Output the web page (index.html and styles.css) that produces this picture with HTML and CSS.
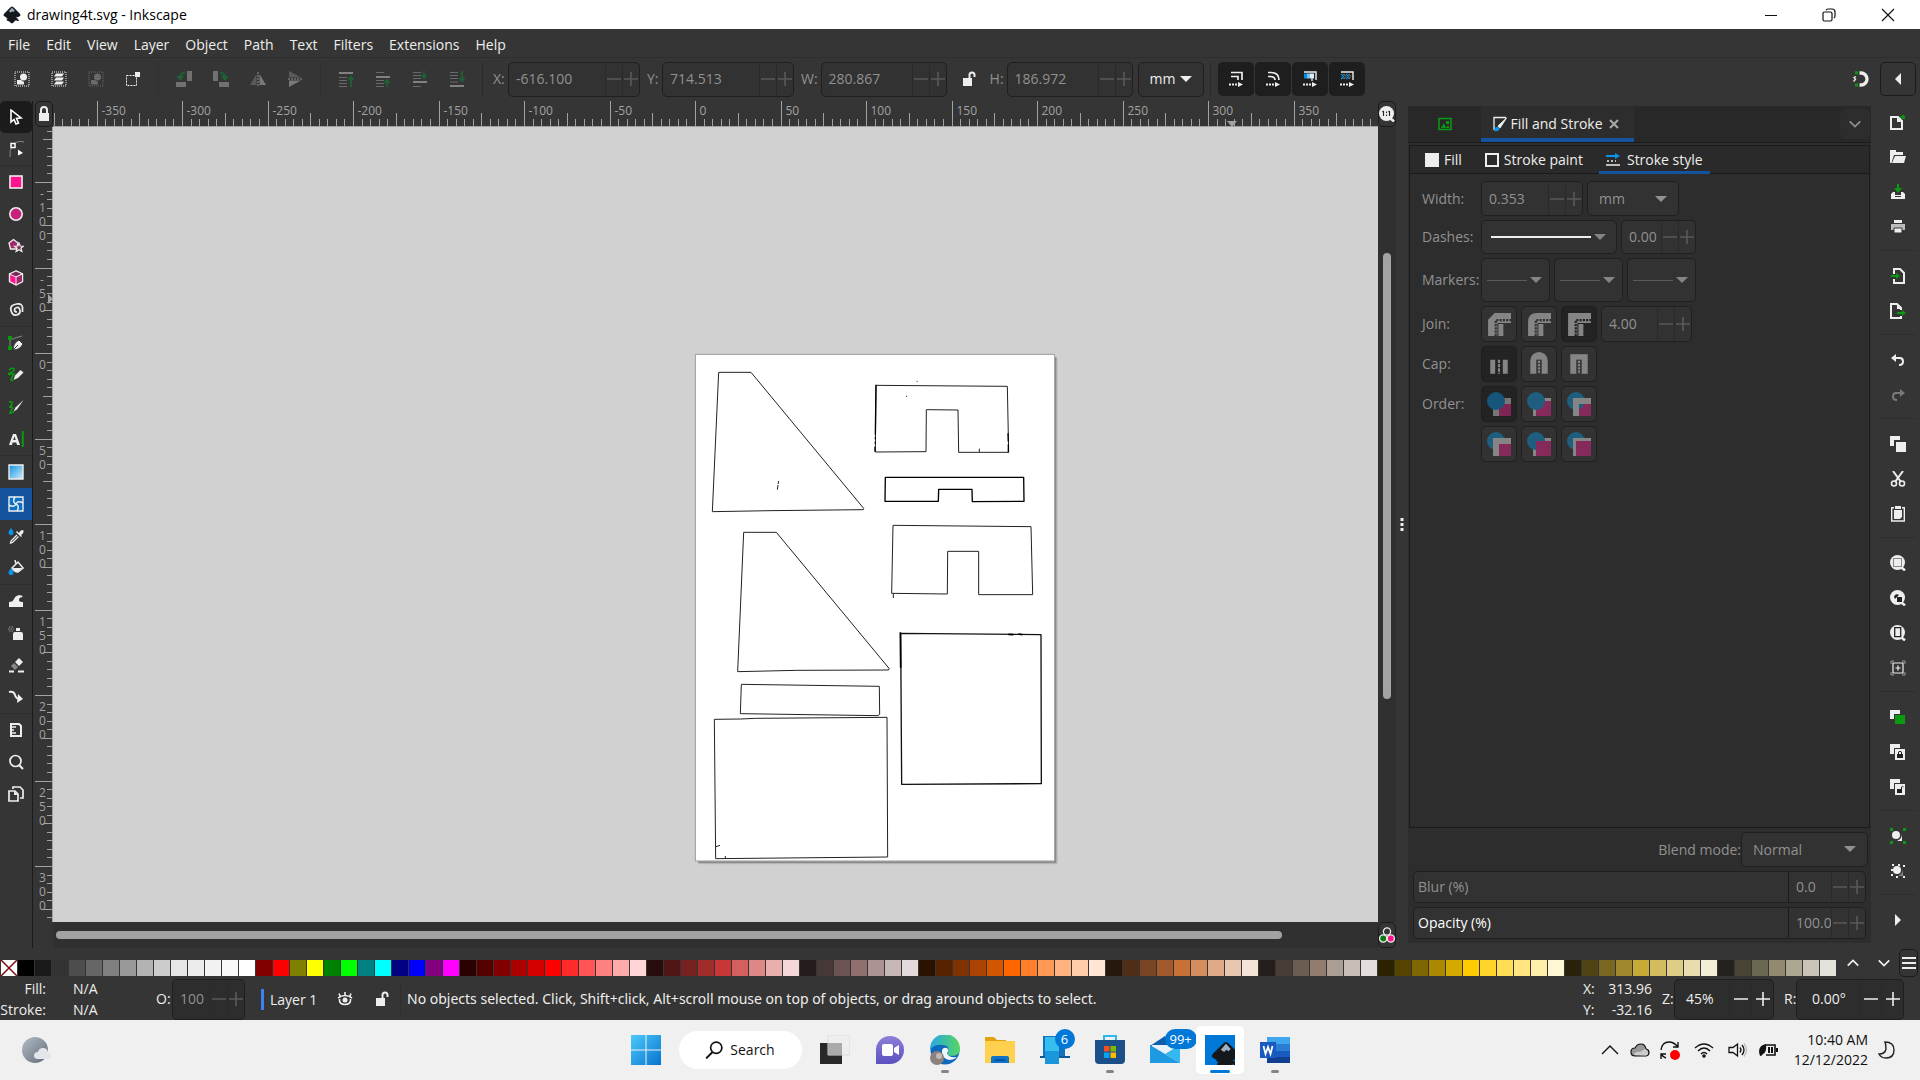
FILE: index.html
```html
<!DOCTYPE html>
<html lang="en">
<head>
<meta charset="utf-8">
<title>drawing4t.svg - Inkscape</title>
<link rel="stylesheet" href="styles.css">
</head>
<body>
<svg class="defs" aria-hidden="true">
  <symbol id="minus" viewBox="0 0 16 16"><path d="M1 8h14" stroke="currentColor" stroke-width="1.6"/></symbol>
  <symbol id="plus" viewBox="0 0 16 16"><path d="M1 8h14M8 1v14" stroke="currentColor" stroke-width="1.6"/></symbol>
  <symbol id="lock" viewBox="0 0 16 16"><path d="M3 7h10v8H3z" fill="currentColor"/><path d="M5 8V4a3 3 0 0 1 6 0v4" fill="none" stroke="currentColor" stroke-width="2"/></symbol>
  <symbol id="unlock" viewBox="0 0 16 16"><path d="M2 7h9v8H2z" fill="currentColor"/><path d="M8.500 8V4a2.500 2.500 0 0 1 5 0v2" fill="none" stroke="currentColor" stroke-width="2"/></symbol>
  <symbol id="inkscape" viewBox="0 0 16 16"><path d="M8 0.500Q9 0.600 10 1.800L15 6.800Q16.500 8.600 14 9.500L11.500 10.200Q13.500 11 13.500 12Q11 12.500 10.500 13.300Q9 15.500 8 15.500Q6.500 15.200 6 14L3.500 12.800Q2.500 12 4.500 11L2 9.500Q-.5 8.500 1 6.800L6 1.800Q7 .6 8 .5Z" fill="#15191d"/><path d="M8 1.500 10.500 4.200 9.300 5.400 8.200 4.600 7 5.800 5.200 4.600Z" fill="#9fb0c2"/><path d="M3 10.500h2M12 12.800h2" stroke="#15191d"/></symbol>
  <symbol id="down" viewBox="0 0 16 16"><path d="m2 5 6 6 6-6" fill="none" stroke="currentColor" stroke-width="2"/></symbol>
  <symbol id="up" viewBox="0 0 16 16"><path d="m2 11 6-6 6 6" fill="none" stroke="currentColor" stroke-width="2"/></symbol>
  <symbol id="tri-down" viewBox="0 0 12 8"><path d="M0 1h12L6 7z" fill="currentColor"/></symbol>
  <symbol id="doc" viewBox="0 0 16 16"><path d="M1 3h7l4 4v8H1z" fill="none" stroke="currentColor" stroke-width="2"/><path d="M7 3v5h5z" fill="currentColor"/></symbol>
  <symbol id="mag" viewBox="0 0 16 16"><circle cx="7.500" cy="7.500" r="7.500" fill="#eee"/><path d="m11 12 4 3.500" stroke="#eee" stroke-width="2.500"/></symbol>
  <symbol id="scale-end" viewBox="0 0 16 16"><path d="M1 13.500h8" stroke="#eee" stroke-width="2" stroke-dasharray="2 1"/><path d="M10 11l5 2.500-5 2.500z" fill="#eee"/></symbol>
</svg>

<header class="titlebar">
  <svg class="i18"><use href="#inkscape"/></svg>
  <h1>drawing4t.svg - Inkscape</h1>
  <div class="winbtns">
    <button aria-label="Minimize"><svg class="i14" viewBox="0 0 14 14"><path d="M1 7.500h12" stroke="#111"/></svg></button>
    <button aria-label="Restore"><svg class="i14" viewBox="0 0 14 14" fill="none" stroke="#111" stroke-width="1.200"><rect x="1" y="4" width="9" height="9" rx="1.500"/><path d="M4 2.200Q4.500 1 6 1h4q3 0 3 3v4q0 1.500-1.200 2"/></svg></button>
    <button aria-label="Close"><svg class="i14" viewBox="0 0 14 14"><path d="m1 1 12 12M13 1 1 13" stroke="#111" stroke-width="1.200"/></svg></button>
  </div>
</header>

<nav class="menubar">
  <a href="#">File</a><a href="#">Edit</a><a href="#">View</a><a href="#">Layer</a><a href="#">Object</a><a href="#">Path</a><a href="#">Text</a><a href="#">Filters</a><a href="#">Extensions</a><a href="#">Help</a>
</nav>

<div class="toolbar">
  <div class="tgroup">
    <button aria-label="Select all"><svg viewBox="0 0 16 16"><path d="M1 1h14v14H1z" fill="none" stroke="#eee" stroke-dasharray="1 1"/><circle cx="9.500" cy="6" r="3.500" fill="#eee"/><path d="M3 9h4l3 2v2.500H3z" fill="#eee"/></svg></button>
    <button aria-label="Select all in all layers"><svg viewBox="0 0 16 16"><path d="M1 1h14v14H1z" fill="none" stroke="#eee" stroke-dasharray="1 1"/><path d="M5 2.500h8l-2 3H3zM5 6.500h8l-2 3H3zM5 10.500h8l-2 3H3z" fill="#eee"/></svg></button>
    <button aria-label="Deselect" class="dim"><svg viewBox="0 0 16 16"><path d="M1 1h14v14H1z" fill="none" stroke="#aaa" stroke-dasharray="1 1"/><circle cx="9.500" cy="6" r="3.500" fill="#aaa"/><path d="M3 9h4l3 2v2.500H3z" fill="#aaa"/></svg></button>
    <button aria-label="Touch selection"><svg viewBox="0 0 16 16"><path d="M1.500 4.500h10v10h-10z" fill="none" stroke="#eee" stroke-dasharray="2 1"/><path d="M10 1h5v5h-5z" fill="#eee"/></svg></button>
  </div>
  <div class="tgroup dim">
    <button aria-label="Rotate left"><svg viewBox="0 0 16 16"><path d="M11 0h5v10h-5zM0 11h10v5H0z" fill="#bbb"/><path d="M9 1.500Q4 2 4 7M1.500 5 4 8.500 7 5" fill="none" stroke="#093" stroke-width="2"/></svg></button>
    <button aria-label="Rotate right"><svg viewBox="0 0 16 16"><path d="M0 0h5v10H0zM6 11h10v5H6z" fill="#bbb"/><path d="M7 1.500q5 .5 5 5.500M9 5l3 3.500L14.500 5" fill="none" stroke="#093" stroke-width="2"/></svg></button>
    <button aria-label="Flip horizontal"><svg viewBox="0 0 16 16"><path d="M6.500 3v11H0z" fill="#888"/><path d="M9.500 3v11H16z" fill="#ccc"/><path d="M8 1v15" stroke="#fff" stroke-dasharray="2 1"/></svg></button>
    <button aria-label="Flip vertical"><svg viewBox="0 0 16 16"><path d="M2 0v6.500h12z" fill="#888"/><path d="M2 16V9.500h12z" fill="#ccc"/><path d="M1 8h15" stroke="#fff" stroke-dasharray="2 1"/></svg></button>
  </div>
  <div class="tgroup dim">
    <button aria-label="Raise to top"><svg viewBox="0 0 16 16"><path d="M1 2h14" stroke="#ddd" stroke-width="2"/><path d="M1 6.500h8M1 9.500h8M1 12.500h8M1 15.500h8" stroke="#aaa"/><path d="M13 16V6M10.500 9 13 6l2.500 3" fill="none" stroke="#093" stroke-width="1.800"/></svg></button>
    <button aria-label="Raise"><svg viewBox="0 0 16 16"><path d="M1 6h14" stroke="#ddd" stroke-width="2"/><path d="M1 1.500h8M1 9.500h8M1 12.500h8M1 15.500h8" stroke="#aaa"/><path d="M12 16V9M9.500 12 12 9l2.500 3" fill="none" stroke="#093" stroke-width="1.800"/></svg></button>
    <button aria-label="Lower"><svg viewBox="0 0 16 16"><path d="M1 11h14" stroke="#ddd" stroke-width="2"/><path d="M1 1.500h8M1 4.500h8M1 7.500h8M1 15.500h8" stroke="#aaa"/><path d="M12 0v7M9.500 4 12 7l2.500-3" fill="none" stroke="#093" stroke-width="1.800"/></svg></button>
    <button aria-label="Lower to bottom"><svg viewBox="0 0 16 16"><path d="M1 15h14" stroke="#ddd" stroke-width="2"/><path d="M1 1.500h8M1 4.500h8M1 7.500h8M1 11h8" stroke="#aaa"/><path d="M13 0v10M10.500 7l2.500 3 2.500-3" fill="none" stroke="#093" stroke-width="1.800"/></svg></button>
  </div>
  <div class="coords">
    <label for="cx">X:</label>
    <div class="spin off wide"><input id="cx" value="-616.100"><button aria-label="Decrease X"><svg><use href="#minus"/></svg></button><button aria-label="Increase X"><svg><use href="#plus"/></svg></button></div>
    <label for="cy" class="ly">Y:</label>
    <div class="spin off wide"><input id="cy" value="714.513"><button aria-label="Decrease Y"><svg><use href="#minus"/></svg></button><button aria-label="Increase Y"><svg><use href="#plus"/></svg></button></div>
    <label for="cw" class="ly">W:</label>
    <div class="spin off size"><input id="cw" value="280.867"><button aria-label="Decrease W"><svg><use href="#minus"/></svg></button><button aria-label="Increase W"><svg><use href="#plus"/></svg></button></div>
    <button class="plain ratio" aria-label="Lock ratio"><svg><use href="#unlock"/></svg></button>
    <label for="ch">H:</label>
    <div class="spin off size"><input id="ch" value="186.972"><button aria-label="Decrease H"><svg><use href="#minus"/></svg></button><button aria-label="Increase H"><svg><use href="#plus"/></svg></button></div>
    <div class="drop unit"><select aria-label="Unit"><option>mm</option></select><svg><use href="#tri-down"/></svg></div>
  </div>
  <div class="toggles">
    <button aria-label="Scale stroke width"><svg viewBox="0 0 16 16"><path d="M3 1.500h11V9M3 5.500h7V9" fill="none" stroke="#eee" stroke-width="1.700"/><use href="#scale-end"/></svg></button>
    <button aria-label="Scale corners"><svg viewBox="0 0 16 16"><path d="M3 1.500h3q8 0 8 7.500M3 5.500h2q5 0 5 3.500" fill="none" stroke="#eee" stroke-width="1.700"/><use href="#scale-end"/></svg></button>
    <button aria-label="Move gradients"><svg viewBox="0 0 16 16"><path d="M2 1h12v8M10 7.500V10" fill="none" stroke="#eee" stroke-width="1.400"/><path d="M2 2.500h3v5H2z" fill="#0b8ce0"/><path d="M5 2.500h3v5H5z" fill="#7cc4f2"/><path d="M8 2.500h4v5H8z" fill="#def"/><use href="#scale-end"/></svg></button>
    <button aria-label="Move patterns"><svg viewBox="0 0 16 16"><path d="M2 1h12v8" fill="none" stroke="#eee" stroke-width="1.400"/><path d="m2 3 2.500 2.500L2 8m5-5 2.500 2.500L7 8" fill="none" stroke="#0b8ce0" stroke-width="1.300"/><path d="m4.500 3 2.500 2.500L4.500 8m5-5L12 5.500 9.500 8" fill="none" stroke="#eee" stroke-dasharray="1 1"/><use href="#scale-end"/></svg></button>
  </div>
  <button class="plain snap" aria-label="Snapping"><svg class="i18" viewBox="0 0 18 18"><path d="M8.500 3H10a6 6 0 0 1 0 12H8.500" fill="none" stroke="#eee" stroke-width="3.300"/><path d="M4 1.300h3v3H4zM4 13.600h3v3H4z" fill="#0a9a12"/><path d="M5 6.500 3 7.500 4.500 9.500 2.500 11.500" fill="none" stroke="#eee" stroke-width="1.300"/></svg></button>
  <button class="box snapmenu" aria-label="Snap options"><svg viewBox="0 0 16 16"><path d="M11 2v12L5 8z" fill="#eee"/></svg></button>
</div>

<main class="work">
  <div class="toolbox">
    <button class="on" aria-label="Selector"><svg viewBox="0 0 16 16"><path d="M3 1v12l3-2.500L8 15l2.500-1L8.500 9.500 13 9z" fill="none" stroke="#fff" stroke-width="1.600"/></svg></button>
    <button aria-label="Node"><svg viewBox="0 0 16 16"><path d="M2 16Q1 9 5 4T16 1" fill="none" stroke="#888"/><path d="M3 2.500h4v4H3z" fill="#353535" stroke="#fff" stroke-width="1.500"/><path d="m10 8.500 5 3.500-5 2.500z" fill="#fff"/></svg></button>
    <hr>
    <button aria-label="Rectangle"><svg viewBox="0 0 16 16"><rect x="2" y="2" width="12" height="12" fill="#ff1490" stroke="#eee" stroke-width="1.600"/></svg></button>
    <button aria-label="Ellipse"><svg viewBox="0 0 16 16"><circle cx="8" cy="8" r="6.200" fill="#c8207c" stroke="#eee" stroke-width="1.600"/></svg></button>
    <button aria-label="Star"><svg viewBox="0 0 16 16"><path d="m1 5 4.500-3.500L10 5l-1.500 6h-6z" fill="#a0296b" stroke="#eee" stroke-width="1.300"/><path d="m11 5 1.200 3 3.300.2-2.600 2 1 3.300-2.900-1.800-2.900 1.800 1-3.300-2.600-2 3.300-.2z" fill="#7e2a59" stroke="#eee" stroke-width="1.200"/></svg></button>
    <button aria-label="3D box"><svg viewBox="0 0 16 16"><path d="m8 1 6.500 3v7.500L8 15l-6.500-3.500V4z" fill="#ff1490" stroke="#eee" stroke-width="1.400"/><path d="m8 1 6.500 3L8 7 1.500 4z" fill="#7e2a59" stroke="#eee"/><path d="M8 7v8l6.500-3.500V4z" fill="#a0296b" stroke="#eee"/></svg></button>
    <button aria-label="Spiral"><svg viewBox="0 0 16 16"><path d="M9 10Q6.500 10 6.500 8T9 5.500 12 8.500 8.500 13 3 8.500 8.500 2 14.500 8v2" fill="none" stroke="#eee" stroke-width="1.700"/></svg></button>
    <hr>
    <button aria-label="Pen"><svg viewBox="0 0 16 16"><path d="M2 13V5Q6 3 14 1" fill="none" stroke="#888"/><path d="M0 1h4v4H0zM0 11h4v4H0z" fill="#0a9a12"/><path d="M5 15Q5 8 11 5l4 4q-3 6-10 6zm0 0 5-5" fill="#eee" stroke="#353535"/></svg></button>
    <button aria-label="Pencil"><svg viewBox="0 0 16 16"><path d="M1 3q4-3 5-1T2 6t4 1q-2 3-3 6l2 1" fill="none" stroke="#0a9a12" stroke-width="1.600"/><path d="m7 8.500 5.500-5.500 3 2.500L10 11l-4.500 2z" fill="#eee"/></svg></button>
    <button aria-label="Calligraphy"><svg viewBox="0 0 16 16"><path d="M1 3q4-1 3 2T1 8q3 0 4 1-2 2-3 5l4-1" fill="none" stroke="#0a9a12" stroke-width="1.600"/><path d="m5.500 12.500 2-4L15.500 1 9 10.500z" fill="#eee"/></svg></button>
    <button aria-label="Text"><svg viewBox="0 0 16 16"><path d="M1 14 5 3h3l4 11H9l-.7-2.500H4.600L4 14zm4.200-5h2.500L6.500 5.200z" fill="#eee" fill-rule="evenodd"/><path d="M14.800 0v16" stroke="#0a9a12" stroke-width="2"/></svg></button>
    <hr>
    <button aria-label="Gradient"><svg viewBox="0 0 16 16"><defs><linearGradient id="gr" x2="1" y2="1"><stop stop-color="#0c93e0"/><stop offset="1" stop-color="#d5ecfa"/></linearGradient></defs><path d="M1 1h14v14H1z" fill="url(#gr)" stroke="#eee" stroke-width="1.400"/></svg></button>
    <button class="cur" aria-label="Mesh"><svg viewBox="0 0 16 16"><path d="M1 1h14v14H1z" fill="#0d6fc4" stroke="#eee" stroke-width="1.400"/><path d="M8 8Q4 6 7 1M8 8q4 2 1 7M8 8q2-4 7-1M8 8q-2 4-7 1" fill="none" stroke="#eee" stroke-width="1.500"/></svg></button>
    <button aria-label="Dropper"><svg viewBox="0 0 16 16"><path d="M3 0q3 4 2.400 5.400a2.500 2.500 0 0 1-4.800 0Q0 4 3 0z" fill="#0b93e8"/><path d="m9 7-6 6-.5 2 2-.5 6-6" fill="none" stroke="#eee" stroke-width="1.300"/><path d="m8 4 5 5 1-1-1-1q3-2 2.500-4.500Q13 1 11 5l-2-2z" fill="#eee"/></svg></button>
    <button aria-label="Bucket"><svg viewBox="0 0 16 16"><path d="m4 8 6-6 5 6-5 4q-4 0-6-4zM8 4 7 0" fill="none" stroke="#eee" stroke-width="1.500"/><path d="M5 8h9l-4 4q-4 0-5-4z" fill="#eee"/><path d="M3 8q3 4 2.400 5.400a2.500 2.500 0 0 1-4.800 0Q0 12 3 8z" fill="#0b93e8"/></svg></button>
    <hr>
    <button aria-label="Tweak"><svg viewBox="0 0 16 16"><path d="M1 14V9q4 0 5-3t5-4q3 0 4 2-4 0-4 3 0 2 4 2v5z" fill="#eee"/></svg></button>
    <button aria-label="Spray"><svg viewBox="0 0 16 16"><path d="M5 9q0-2 2-2h6q2 0 2 2v6H5zM8 3h4v3H8z" fill="#eee"/><path d="M1 2h5M0 4h6M1 6h4" stroke="#999" stroke-dasharray="1.500 1"/></svg></button>
    <button aria-label="Eraser"><svg viewBox="0 0 16 16"><path d="m7 5 4-4 4 4-4 4z" fill="#eee"/><path d="m3 9 3-3 4 4-3 3z" fill="#888"/><path d="M1 14.500h5m4 0h6" stroke="#eee" stroke-width="1.800"/></svg></button>
    <button aria-label="Connector"><svg viewBox="0 0 16 16"><path d="M1 3q5-1 6 3t5 4" fill="none" stroke="#eee" stroke-width="2"/><path d="m10 5 5 5-6 4z" fill="#eee"/></svg></button>
    <hr>
    <button aria-label="Measure"><svg viewBox="0 0 16 16"><path d="M3 2h8l2 2v10H3z" fill="none" stroke="#eee" stroke-width="2"/><path d="M3 5h5M3 8h3M3 11h5" stroke="#eee" stroke-width="1.300"/></svg></button>
    <button aria-label="Zoom"><svg viewBox="0 0 16 16"><circle cx="7.500" cy="7" r="5.500" fill="none" stroke="#eee" stroke-width="1.700"/><path d="m11 11 4 4" stroke="#eee" stroke-width="2.200"/></svg></button>
    <button aria-label="Pages"><svg viewBox="0 0 16 16"><path d="M5 3V1h7l3 3v8h-3" fill="none" stroke="#eee" stroke-width="1.700"/><path d="M1 5h6l3 3v7H1z" fill="none" stroke="#eee" stroke-width="1.700"/><path d="M6 5v4h4z" fill="#eee"/></svg></button>
  </div>

  <section class="desk">
    <button class="box mini" aria-label="Lock guides"><svg><use href="#lock"/></svg></button>
    <svg class="ruler-h" id="ruler-h"></svg>
    <button class="box mini" aria-label="Zoom 1:1"><svg viewBox="0 0 16 16"><use href="#mag"/><path d="M4.500 5v5M10.500 5v5M7.500 5.500V7M7.500 8.500V10M3.500 6l1-1M9.500 6l1-1" stroke="#222" stroke-width="1.100"/></svg></button>
    <svg class="ruler-v" id="ruler-v"></svg>
    <div class="canvas">
      <svg class="page" viewBox="0 0 1110 1560" fill="none" stroke="#222" stroke-width="3" stroke-linejoin="round">
        <path d="M1097 22v1515H24" stroke="#8a8a8a" stroke-width="6"/>
        <path d="M1101 26v1515H28" stroke="#b4b4b4" stroke-width="3"/>
        <path d="M16 13h1078v1520H16z" fill="#fff" stroke="#999"/>
        <path d="M86 67h97l338 408-1 4-280 3-173 3zM161 547h98l338 408-1 5-276 1-177 4z"/>
        <path d="m558 106 394 3 4 198H806l-2-127-95-1-1 126-152 1zM868 296v10"/>
        <path d="m558 104-2 150M556 262v5M556 275v6M555 290v15M954 250l1 25M955 283v24" stroke="#000" stroke-width="4"/>
        <path d="m586 382h415l1 72-155 1-1-37H746l-1 36H585z" stroke="#000" stroke-width="4"/>
        <path d="m609 526 414 4 5 204H866V604h-93l-1 128-167-2zM610 730v14"/>
        <path d="m632 850 421 4 1 447-419 2z" stroke="#111" stroke-width="4"/>
        <path d="m631 847 1 106M955 853l15 1M985 852l12 2" stroke="#000" stroke-width="5"/>
        <path d="m154 1003 414 6 1 84-5 4-413-6zM73 1108l79-1 45-2 394-3 2 419-516 5z"/>
        <path d="m78 1490 12-4M106 1518v8M262 419l2-14M264 402l2-9M680 94h3M648 139h3"/>
      </svg>
    </div>
    <div class="scroll-v"><i></i></div>
    <div></div>
    <div class="scroll-h"><i></i></div>
    <button class="box mini" aria-label="Color management"><svg viewBox="0 0 16 16"><circle cx="8" cy="4.500" r="3.600" fill="none" stroke="#eee" stroke-width="1.300"/><circle cx="4.200" cy="11.500" r="3.600" fill="#0a7a12" stroke="#eee" stroke-width="1.300"/><circle cx="11.800" cy="11.500" r="3.600" fill="#ff1490" stroke="#eee" stroke-width="1.300"/></svg></button>
  </section>

  <div class="splitter"><svg viewBox="0 0 4 16"><path d="M.5 1h3v3h-3zM.5 6h3v3h-3zM.5 11h3v3h-3z" fill="#eee"/></svg></div>

  <aside class="dock">
    <div class="tabs">
      <button class="tab img" aria-label="Image"><svg class="i14" viewBox="0 0 14 14"><path d="M1 1.500h12v11H1z" fill="none" stroke="#0a9a12" stroke-width="1.500"/><path d="m3 11 3-5 2 5zM8 11l2-3 1.500 3zM8 4h3v3H8z" fill="#0a9a12"/></svg></button>
      <button class="tab active"><svg viewBox="0 0 16 16"><path d="M2 14V1.500h12" fill="none" stroke="#eee" stroke-width="1.300"/><path d="m6 10 8.500-8L8 12z" fill="#eee" stroke="#eee"/><path d="M2 15q1-5 4-4t1 3q-2 2-5 1z" fill="#0b93e8"/></svg><span>Fill and Stroke</span><svg class="x" viewBox="0 0 10 10"><path d="m1 1 8 8M9 1 1 9" stroke="#aaa" stroke-width="2"/></svg></button>
      <button class="more" aria-label="Dialogs"><svg class="i14"><use href="#down"/></svg></button>
    </div>
    <div class="frame">
      <div class="subtabs">
        <button><i class="sq full"></i>Fill</button>
        <button><i class="sq"></i>Stroke paint</button>
        <button class="sel"><svg viewBox="0 0 16 16"><path d="M0 4h10" stroke="#0b93e8" stroke-width="2"/><path d="m9 1 5 3-5 3z" fill="#0b93e8"/><path d="M1 9h2m2 0h2m2 0h1M0 13h14" stroke="#eee" stroke-width="1.500"/></svg>Stroke style</button>
      </div>
      <div class="form">
        <label for="sw">Width:</label>
        <div class="row r35"><div class="spin off w102"><input id="sw" value="0.353"><button aria-label="Thinner"><svg><use href="#minus"/></svg></button><button aria-label="Thicker"><svg><use href="#plus"/></svg></button></div><div class="drop off w92"><select aria-label="Stroke unit"><option>mm</option></select><svg><use href="#tri-down"/></svg></div></div>
        <label for="dash">Dashes:</label>
        <div class="row r34"><button class="line solid" id="dash"><i></i><svg><use href="#tri-down"/></svg></button><div class="spin off w75"><input aria-label="Dash offset" value="0.00"><button aria-label="Less offset"><svg><use href="#minus"/></svg></button><button aria-label="More offset"><svg><use href="#plus"/></svg></button></div></div>
        <label for="mk">Markers:</label>
        <div class="row r44"><button class="line" id="mk"><i></i><svg><use href="#tri-down"/></svg></button><button class="line" aria-label="Mid marker"><i></i><svg><use href="#tri-down"/></svg></button><button class="line" aria-label="End marker"><i></i><svg><use href="#tri-down"/></svg></button></div>
        <label for="jn">Join:</label>
        <div class="row r36">
          <button class="opt" id="jn" aria-label="Bevel join"><svg viewBox="0 0 22 22"><path d="M1 22V7l6-6h15v9h-7v12z" fill="#858585"/><path d="M8 22V7.500h14" fill="none" stroke="#333" stroke-width="2" stroke-dasharray="2 1"/><path d="M10 22V10.500h12" fill="none" stroke="#333"/></svg></button>
          <button class="opt" aria-label="Round join"><svg viewBox="0 0 22 22"><path d="M1 22V9q0-8 8-8h13v9h-7v12z" fill="#858585"/><path d="M8 22V7.500h14" fill="none" stroke="#333" stroke-width="2" stroke-dasharray="2 1"/><path d="M10 22V10.500h12" fill="none" stroke="#333"/></svg></button>
          <button class="opt on" aria-label="Miter join"><svg viewBox="0 0 22 22"><path d="M1 22V1h21v9h-7v12z" fill="#858585"/><path d="M8 22V7.500h14" fill="none" stroke="#222" stroke-width="2" stroke-dasharray="2 1"/><path d="M10 22V10.500h12" fill="none" stroke="#222"/></svg></button>
          <div class="spin off w91"><input aria-label="Miter limit" value="4.00"><button aria-label="Lower limit"><svg><use href="#minus"/></svg></button><button aria-label="Raise limit"><svg><use href="#plus"/></svg></button></div>
        </div>
        <label for="cp">Cap:</label>
        <div class="row r36">
          <button class="opt on" id="cp" aria-label="Butt cap"><svg viewBox="0 0 22 22"><path d="M3 7h4.500v13H3zM14.500 7H19v13h-4.500z" fill="#858585"/><path d="M11 7v13" stroke="#858585" stroke-width="2" stroke-dasharray="3 1"/></svg></button>
          <button class="opt" aria-label="Round cap"><svg viewBox="0 0 22 22"><path d="M3 20V8a8 8 0 0 1 16 0v12z" fill="#858585"/><path d="M8.500 20V7h5v13" fill="#333"/><path d="M11 8v12" stroke="#858585" stroke-width="2" stroke-dasharray="2 1"/></svg></button>
          <button class="opt" aria-label="Square cap"><svg viewBox="0 0 22 22"><path d="M3 20V2h16v18z" fill="#858585"/><path d="M8.500 20V7h5v13" fill="#333"/><path d="M11 8v12" stroke="#858585" stroke-width="2" stroke-dasharray="2 1"/></svg></button>
        </div>
        <label for="od">Order:</label>
        <div class="row r36">
          <button class="opt on" id="od" aria-label="Fill, stroke, markers"><svg viewBox="0 0 24 24"><path d="M6 6h18v18H6z" fill="#777"/><path d="M12 12h12v12H12z" fill="#7e2553"/><circle cx="9" cy="9" r="9" fill="#17557a"/></svg></button>
          <button class="opt" aria-label="Stroke, fill, markers"><svg viewBox="0 0 24 24"><path d="M6 6h18v18H6z" fill="#858585"/><path d="M9 9h15v15H9z" fill="#852a5a"/><circle cx="9" cy="9" r="9" fill="#205e80"/></svg></button>
          <button class="opt" aria-label="Fill, markers, stroke"><svg viewBox="0 0 24 24"><path d="M12 12h12v12H12z" fill="#852a5a"/><circle cx="9" cy="9" r="9" fill="#205e80"/><path d="M6 6h18v6H12v12H6z" fill="#858585"/></svg></button>
        </div>
        <span></span>
        <div class="row r36">
          <button class="opt" aria-label="Markers, fill, stroke"><svg viewBox="0 0 24 24"><circle cx="9" cy="9" r="9" fill="#205e80"/><path d="M6 6h18v18H6z" fill="#858585"/><path d="M12 12h12v12H12z" fill="#852a5a"/></svg></button>
          <button class="opt" aria-label="Stroke, markers, fill"><svg viewBox="0 0 24 24"><path d="M6 6h18v18H6z" fill="#858585"/><circle cx="9" cy="9" r="9" fill="#205e80"/><path d="M9 9h15v15H9z" fill="#852a5a"/></svg></button>
          <button class="opt" aria-label="Markers, stroke, fill"><svg viewBox="0 0 24 24"><circle cx="9" cy="9" r="9" fill="#205e80"/><path d="M6 6h18v18H6z" fill="#858585"/><path d="M9 9h15v15H9z" fill="#852a5a"/></svg></button>
        </div>
      </div>
    </div>
    <div class="blend"><label for="bm">Blend mode:</label><div class="drop off"><select id="bm"><option>Normal</option></select><svg><use href="#tri-down"/></svg></div></div>
    <div class="slide spin off"><label for="bl">Blur (%)</label><input id="bl" value="0.0"><button aria-label="Less blur"><svg><use href="#minus"/></svg></button><button aria-label="More blur"><svg><use href="#plus"/></svg></button></div>
    <div class="slide spin off lit"><label for="op">Opacity (%)</label><input id="op" value="100.0"><button aria-label="Less opacity"><svg><use href="#minus"/></svg></button><button aria-label="More opacity"><svg><use href="#plus"/></svg></button></div>
  </aside>

  <div class="commands">
    <button aria-label="New"><svg viewBox="0 0 16 16"><use href="#doc"/><path d="m13 0 1 2h2l-1.500 1.500.5 2-2-1-2 1 .5-2L10 2h2z" fill="#0a9a12"/></svg></button>
    <button aria-label="Open"><svg viewBox="0 0 16 16"><path d="M0 1h6v2h7v3H4L1.500 14H0z" fill="#eee"/><path d="M5 7h11l-2 7H2z" fill="#eee"/></svg></button>
    <button aria-label="Save"><svg viewBox="0 0 16 16"><path d="M1 15V10l2-2h2v3h6V8h2l2 2v5z" fill="#eee"/><path d="M5 12.500h6" stroke="#353535"/><path d="M8 0v5" stroke="#0a9a12" stroke-width="2"/><path d="M4 4h8L8 9z" fill="#0a9a12"/></svg></button>
    <button aria-label="Print"><svg viewBox="0 0 16 16"><path d="M4 1h8v3H4z" fill="#eee"/><path d="M1 5h14v6H1z" fill="#bbb"/><path d="M4 9h8v5H4z" fill="#eee" stroke="#353535"/></svg></button>
    <hr>
    <button aria-label="Import"><svg viewBox="0 0 16 16"><path d="M4 6V1h6l4 4v10H4v-4" fill="none" stroke="#eee" stroke-width="2"/><path d="M1 8h6" stroke="#0a9a12" stroke-width="2"/><path d="m6 5 4 3-4 3z" fill="#0a9a12"/></svg></button>
    <button aria-label="Export"><svg viewBox="0 0 16 16"><path d="M11 7V5L7 1H1v14h10v-2" fill="none" stroke="#eee" stroke-width="2"/><path d="M7 1v5h4z" fill="#eee"/><path d="M7 10h6" stroke="#0a9a12" stroke-width="2"/><path d="m12 7 4 3-4 3z" fill="#0a9a12"/></svg></button>
    <hr>
    <button aria-label="Undo"><svg viewBox="0 0 16 16"><path d="M3 6h7q3 0 3 3.500T9 13" fill="none" stroke="#eee" stroke-width="2"/><path d="M6 2v8L1 6z" fill="#eee"/></svg></button>
    <button aria-label="Redo" class="dim"><svg viewBox="0 0 16 16"><path d="M13 6H6Q3 6 3 9.500T7 13" fill="none" stroke="#ccc" stroke-width="2"/><path d="M10 2v8l5-4z" fill="#ccc"/></svg></button>
    <hr>
    <button aria-label="Copy"><svg viewBox="0 0 16 16"><path d="M0 0h10v4H4v6H0zM6 6h10v10H6z" fill="#eee"/></svg></button>
    <button aria-label="Cut"><svg viewBox="0 0 16 16"><path d="m3 0 8 11M13 0 5 11" stroke="#eee" stroke-width="2"/><circle cx="4" cy="12.500" r="2.500" fill="none" stroke="#eee" stroke-width="1.600"/><circle cx="12" cy="12.500" r="2.500" fill="none" stroke="#eee" stroke-width="1.600"/></svg></button>
    <button aria-label="Paste"><svg viewBox="0 0 16 16"><path d="M4 1.700H1.700v13.300h12.600V1.700H12" fill="none" stroke="#eee" stroke-width="1.400"/><path d="M5 0h6v3H5zM4 4h8v7l-2 2H4z" fill="#eee"/></svg></button>
    <hr>
    <button aria-label="Zoom selection"><svg viewBox="0 0 16 16"><use href="#mag"/><path d="M3.500 3.500h8v8h-8z" fill="none" stroke="#222" stroke-dasharray="1 1"/></svg></button>
    <button aria-label="Zoom drawing"><svg viewBox="0 0 16 16"><use href="#mag"/><path d="M7 7h5v5H7zM4 7a3 3 0 0 1 5-2L5 9z" fill="#222"/></svg></button>
    <button aria-label="Zoom page"><svg viewBox="0 0 16 16"><use href="#mag"/><path d="M4.700 2.700h6v9h-6z" fill="none" stroke="#222" stroke-width="1.300"/></svg></button>
    <button aria-label="Center page"><svg viewBox="0 0 16 16"><path d="M1 4V1h3M12 1h3v3M15 12v3h-3M4 15H1v-3" fill="none" stroke="#999"/><path d="M3 3h10v10H3zM8 5.500v5M5.500 8h5" fill="none" stroke="#eee" stroke-width="1.200"/></svg></button>
    <hr>
    <button aria-label="Duplicate"><svg viewBox="0 0 16 16"><path d="M0 1h10v4H4v5H0z" fill="#eee"/><path d="M5 6h10v9H5z" fill="#0a9a12"/></svg></button>
    <button aria-label="Clone"><svg viewBox="0 0 16 16"><path d="M0 0h10v4H4v6H0zM5 5h10v11H5z" fill="#eee"/><path d="M7 10h6v4H7z" fill="#222"/><path d="M8.500 10V8q1.500-1.500 3 0v2" fill="none" stroke="#222"/></svg></button>
    <button aria-label="Unlink clone"><svg viewBox="0 0 16 16"><path d="M0 0h10v4H4v6H0zM5 5h10v11H5z" fill="#eee"/><path d="M7 10h5v4H7z" fill="#222"/><path d="M11.500 10V8q1-1.500 2 0" fill="none" stroke="#222"/></svg></button>
    <hr>
    <button aria-label="Group"><svg viewBox="0 0 16 16"><path d="M0 0h3v3H0zM13 0h3v3h-3zM0 13h3v3H0zM13 13h3v3h-3z" fill="#0a9a12"/><circle cx="6" cy="7" r="4" fill="#eee"/><path d="M12 6v7H7q5-2 5-7z" fill="#eee"/></svg></button>
    <button aria-label="Ungroup"><svg viewBox="0 0 16 16"><path d="M2 1h2v2H2zM8 1h2v2H8zM13 2h2v2h-2zM1 6h2v2H1zM1 11h2v2H1zM6 13h2v2H6zM13 13h2v2h-2z" fill="#eee"/><circle cx="7" cy="7" r="4" fill="#eee"/><path d="M13 6v7H8q5-2 5-7z" fill="#888"/></svg></button>
    <hr>
    <button aria-label="More commands"><svg viewBox="0 0 16 16"><path d="M5 2v12l6-6z" fill="#eee"/></svg></button>
  </div>
</main>

<div class="palette">
  <div class="swatches" id="swatches"></div>
  <button class="plain" aria-label="Scroll palette up"><svg class="i14"><use href="#up"/></svg></button>
  <button class="plain" aria-label="Scroll palette down"><svg class="i14"><use href="#down"/></svg></button>
  <button class="box pmenu" aria-label="Palette menu"><svg viewBox="0 0 16 16"><path d="M1 3h14M1 8h14M1 13h14" stroke="#eee" stroke-width="2"/></svg></button>
</div>

<footer class="status">
  <dl class="style"><dt>Fill:</dt><dd>N/A</dd><dt>Stroke:</dt><dd>N/A</dd></dl>
  <label for="oo">O:</label>
  <div class="spin off w73"><input id="oo" value="100"><button aria-label="Less"><svg><use href="#minus"/></svg></button><button aria-label="More"><svg><use href="#plus"/></svg></button></div>
  <button class="plain layer">Layer 1</button>
  <button class="plain eye" aria-label="Hide layer"><svg viewBox="0 0 16 16"><circle cx="8" cy="9" r="2.500" fill="#eee"/><path d="M1 7q7-5 14 0M2.500 8Q2 13.500 8 13.500T13.500 8M8 5V1M3.500 6 2 2.500M12.500 6 14 2.500" fill="none" stroke="#eee" stroke-width="1.600"/></svg></button>
  <button class="plain eye" aria-label="Lock layer"><svg><use href="#unlock"/></svg></button>
  <p class="msg">No objects selected. Click, Shift+click, Alt+scroll mouse on top of objects, or drag around objects to select.</p>
  <dl class="pos"><dt>X:</dt><dd>313.96</dd><dt>Y:</dt><dd>-32.16</dd></dl>
  <label for="zz">Z:</label>
  <div class="spin w100"><input id="zz" value="45%"><button aria-label="Zoom out"><svg><use href="#minus"/></svg></button><button aria-label="Zoom in"><svg><use href="#plus"/></svg></button></div>
  <label for="rr" class="lr">R:</label>
  <div class="spin w108"><input id="rr" value="0.00°"><button aria-label="Rotate left"><svg><use href="#minus"/></svg></button><button aria-label="Rotate right"><svg><use href="#plus"/></svg></button></div>
</footer>

<div class="taskbar">
  <button class="widget" aria-label="Weather"><svg viewBox="0 0 30 28"><defs><linearGradient id="mo" x2="1" y2="1"><stop stop-color="#b4bec8"/><stop offset="1" stop-color="#626b75"/></linearGradient></defs><circle cx="13" cy="14" r="13" fill="url(#mo)"/><path d="M16 23q-4 0-4-3.500t4-3.500q1-4 5-4t5 4q3 1 3 4t-3 3z" fill="#e3e7ec"/></svg></button>
  <div class="apps">
    <button aria-label="Start"><svg viewBox="0 0 30 30"><defs><linearGradient id="wn" x2="1" y2="1"><stop stop-color="#4ccbfb"/><stop offset="1" stop-color="#0672cf"/></linearGradient></defs><path d="M0 0h14.500v14.500H0zM15.500 0H30v14.500H15.500zM0 15.500h14.500V30H0zM15.500 15.500H30V30H15.500z" fill="url(#wn)"/></svg></button>
    <button class="search"><svg viewBox="0 0 16 16"><circle cx="10" cy="6" r="5" fill="none" stroke="#111" stroke-width="1.500"/><path d="m6.500 10-5.500 5.500" stroke="#111" stroke-width="1.700"/></svg>Search</button>
    <button aria-label="Task view"><svg viewBox="0 0 30 30"><path d="M0 8h22v21H0z" fill="#282828"/><path d="M8 0h22v20H8z" fill="#eee" stroke="#ddd"/><path d="M8 8h14v12H8z" fill="#aaa"/></svg></button>
    <button aria-label="Chat"><svg viewBox="0 0 30 30"><defs><linearGradient id="ct" x2="0" y2="1"><stop stop-color="#8d7fd8"/><stop offset="1" stop-color="#5b50c0"/></linearGradient></defs><path d="M1 29V15a14 14 0 1 1 14 14z" fill="url(#ct)"/><rect x="7" y="9" width="11" height="12" rx="2" fill="#fff"/><path d="m19 13 5-3v10l-5-3z" fill="#fff"/></svg></button>
    <button class="run" aria-label="Edge"><svg viewBox="0 0 30 30"><defs><linearGradient id="ed" x2="1"><stop stop-color="#27a6e6"/><stop offset="1" stop-color="#56d660"/></linearGradient></defs><circle cx="15" cy="15" r="14.500" fill="#0e69bd"/><path d="M0 15A15 15 0 0 1 30 13q0 8-8 8-6 0-4-4 2-6-5-7Q4 9 0 15z" fill="url(#ed)"/><path d="M12 15q2-4 6-1 1 2-1 4 1 5 10 4-3 3-8 3-8-2-7-10z" fill="#eef4f8"/><circle cx="7" cy="23" r="7" fill="#8b817e"/><circle cx="9" cy="21" r="3" fill="#c4b9b5"/></svg></button>
    <button aria-label="File Explorer"><svg viewBox="0 0 30 30"><path d="M0 2h9l3 3h9v10H0z" fill="#e3a20b"/><path d="M0 6h30v22H0z" fill="#ffd04d"/><path d="M6 28v-5q0-2 2-2h14q2 0 2 2v5z" fill="#0e73c9"/><path d="M10 25h10" stroke="#064a8a" stroke-width="1.500"/></svg></button>
    <button class="badge-host" aria-label="Phone Link, 6 new"><svg viewBox="0 0 30 30"><path d="M3 1h22v21H3z" fill="#1272bd"/><path d="M0 21h30v2H0z" fill="#0d5896"/><path d="M5 2h14v27H5z" fill="#36bfee"/><path d="M5 16h14v13H5z" fill="#1a96dc"/></svg><span class="badge">6</span></button>
    <button class="run" aria-label="Store"><svg viewBox="0 0 30 30"><path d="M9 6V1h12v5" fill="none" stroke="#2eb8ef" stroke-width="2"/><path d="M0 5h30v20q0 4-4 4H4q-4 0-4-4z" fill="#1a4f88"/><path d="M9 11h5.500v5.500H9z" fill="#f25022"/><path d="M15.500 11H21v5.500h-5.500z" fill="#7fba00"/><path d="M9 17.500h5.500V23H9z" fill="#00a4ef"/><path d="M15.500 17.500H21V23h-5.500z" fill="#ffb900"/></svg></button>
    <button class="badge-host" aria-label="Mail, 99+ new"><svg viewBox="0 0 30 30"><path d="M0 11 15 1l15 10v6H0z" fill="#0d5fae"/><path d="M2 10h26v8L15 24 2 18z" fill="#e8f2f8"/><path d="M0 10 30 28H0z" fill="#1d9ae2"/><path d="M30 10v18L15 19z" fill="#35b7f0"/></svg><span class="badge">99+</span></button>
    <button class="active" aria-label="Inkscape"><svg viewBox="0 0 30 30"><path d="M0 0h30v30H0z" fill="#0078d7"/><svg x="6" y="6" width="18" height="18"><use href="#inkscape"/></svg></svg></button>
    <button class="run" aria-label="Word"><svg viewBox="0 0 30 30"><path d="M7 2h23v7H7z" fill="#41a5ee"/><path d="M7 9h23v7H7z" fill="#2b7cd3"/><path d="M7 16h23v6H7z" fill="#185abd"/><path d="M7 22h23v6H7z" fill="#103f91"/><path d="M0 7h16v16H0z" fill="#185abd"/><path d="m3.500 11 2 8 2.500-7 2.500 7 2-8" fill="none" stroke="#fff" stroke-width="1.800"/></svg></button>
  </div>
  <div class="tray">
    <button aria-label="Hidden icons"><svg viewBox="0 0 20 20"><path d="m2 14 8-8 8 8" fill="none" stroke="#111" stroke-width="1.400"/></svg></button>
    <button aria-label="OneDrive"><svg viewBox="0 0 20 20"><path d="M5 16q-4 0-4-4t4-4q2-4 6-4t5 5q3 .5 3 3.500t-3 3.500z" fill="#999" stroke="#111" stroke-width="1.200"/><path d="M4 15q1-4 6-3l5-3q3 1 3 4t-3 2.500z" fill="#ccc"/></svg></button>
    <button aria-label="Update"><svg viewBox="0 0 20 20"><path d="M1 10Q2 2 9 2q5 0 9 5M18 2v5h-5M6 18q-3-1-5-4M1 19v-5h5" fill="none" stroke="#111" stroke-width="1.400"/><circle cx="15" cy="15" r="5" fill="#f00"/></svg></button>
    <button aria-label="Wi-Fi" class="wide"><svg viewBox="0 0 20 20"><path d="M1 8q9-8 18 0M4 11q6-6 12 0M7 14q3-3 6 0" fill="none" stroke="#111" stroke-width="1.500"/><circle cx="10" cy="16" r="1.800" fill="#111"/></svg></button>
    <button aria-label="Volume"><svg viewBox="0 0 20 20"><path d="M1 7.500h4L9.500 4v12L5 12.500H1z" fill="none" stroke="#111" stroke-width="1.300"/><path d="M12 7.500q2 2.500 0 5M14 5q4 5 0 10" fill="none" stroke="#111" stroke-width="1.300"/><path d="M16 3.500q5 6.500 0 13" fill="none" stroke="#bbb" stroke-width="1.300"/></svg></button>
    <button aria-label="Battery"><svg viewBox="0 0 20 20"><path d="M7 5h10v10H8" fill="none" stroke="#111" stroke-width="1.600"/><path d="M18 8h2v4h-2zM10 7h2v6h-2zM13 7h2v6h-2zM1 12q0-7 7-8 1 8-3 10-1 2-3 2z" fill="#111"/></svg></button>
    <div class="clock"><span>10:40 AM</span><span>12/12/2022</span></div>
    <button aria-label="Focus"><svg viewBox="0 0 20 20"><path d="M8 2q9 0 9 8t-8 8q-5 0-7-4 6 0 7-5 0-4-1-7z" fill="none" stroke="#222" stroke-width="1.400"/></svg></button>
  </div>
</div>
<script src="script.js"></script>
</body>
</html>
```
FILE: styles.css
```css
* { box-sizing: border-box; }
body {
  margin: 0; min-height: 100vh; display: flex; flex-direction: column; overflow: hidden;
  font: 14px/20px "Open Sans", "Noto Sans", sans-serif; color: #eeeeec; background: #353535;
}
button, input, select { font: inherit; color: inherit; }
button { display: flex; align-items: center; justify-content: center; padding: 0; border: 0; background: none; }
svg { display: block; width: 16px; height: 16px; flex: none; }
p, dl, dd, h1 { margin: 0; }
a { color: inherit; text-decoration: none; }
hr { width: 100%; margin: 0; border: 0; border-top: 1px solid #2e2e2e; }
.defs { position: absolute; width: 0; height: 0; }
.i14 { width: 14px; height: 14px; }
.i18 { width: 18px; height: 18px; }
.dim { opacity: .45; }
.box { border: 1px solid #1b1b1b; border-radius: 5px; background: #353535; }

.titlebar { display: flex; align-items: center; height: 29px; padding: 0 2px 0 3px; gap: 6px; background: #fff; color: #000; }
.titlebar h1 { flex: 1; font: inherit; }
.winbtns { display: flex; }
.winbtns button { width: 58px; height: 29px; }
.winbtns button:last-child { width: 60px; }

.menubar { display: flex; gap: 16px; height: 29px; padding: 6px 8px 2px; border-bottom: 1px solid #2e2e2e; line-height: 20px; }

.toolbar { display: flex; align-items: center; height: 43px; padding: 0 4px 1px 3px; }
.tgroup { display: flex; }
.tgroup button { width: 37px; height: 34px; }
.tgroup + .tgroup { margin-left: 7px; padding-left: 6px; border-left: 1px solid #2a2a2a; }
.coords { display: flex; align-items: center; gap: 3px; margin-left: 7px; padding-left: 10px; border-left: 1px solid #2a2a2a; color: #919190; }
.coords label { min-width: 12px; }
.coords .ly { margin-left: 4px; }
.wide { width: 132px; }
.size { width: 126px; }
.ratio { width: 35px; margin-left: 2px; color: #eeeeec; }
.unit { width: 66px; margin-left: 2px; color: #eeeeec; }
.toggles { display: flex; gap: 1px; margin-left: 6px; padding-left: 7px; border-left: 1px solid #2a2a2a; }
.toggles button { width: 36px; height: 34px; border-radius: 5px; background: #1e1e1e; }
.snap { margin-left: auto; }
.snapmenu { width: 36px; height: 34px; margin-left: 11px; }

.spin { display: flex; height: 35px; border: 1px solid #1f1f1f; border-radius: 5px; background: #323232; overflow: hidden; }
.spin input { flex: 1; width: 0; min-width: 0; padding: 0 0 0 7px; border: 0; background: none; }
.spin button { width: 17px; border-left: 1px solid #2a2a2a; }
.off { color: #919190; }
.off button { color: #5a5a5a; }
.drop { position: relative; display: flex; height: 35px; border: 1px solid #1f1f1f; border-radius: 5px; background: #323232; }
.drop select { flex: 1; width: 100%; padding: 0 11px; border: 0; background: none; appearance: none; }
.drop svg { position: absolute; right: 11px; top: 12px; width: 12px; height: 8px; pointer-events: none; }

.work { flex: 1; display: flex; min-height: 0; }
.toolbox { width: 33px; border-right: 1px solid #1b1b1b; }
.toolbox button { width: 32px; height: 32px; }
.toolbox .on { border-radius: 5px; background: #1b1b1b; }
.toolbox .cur { background: #15539e; }

.desk { flex: 1; display: grid; grid-template: 26px 1fr 26px / 18px 1fr 18px; min-width: 0; padding-left: 2px; }
.mini { overflow: hidden; }
.ruler-h, .ruler-v { width: 100%; height: 100%; overflow: hidden; font-size: 12px; fill: #a2a2a2; }
.canvas { position: relative; overflow: hidden; background: #d1d1d1; }
.page { position: absolute; left: 637px; top: 223px; width: 370px; height: 520px; }
.scroll-v, .scroll-h { background: #303030; }
.scroll-v { padding: 126px 5px 0; }
.scroll-v i { display: block; width: 8px; height: 446px; border-radius: 4px; background: #a3a3a1; }
.scroll-h { padding: 9px 96px 0 3px; }
.scroll-h i { display: block; height: 8px; border-radius: 4px; background: #a3a3a1; }

.splitter { display: flex; align-items: center; justify-content: center; width: 12px; }
.splitter svg { width: 4px; }

.dock { display: flex; flex-direction: column; width: 463px; margin: 5px 0; background: #2d2d2d; }
.tabs { display: flex; height: 37px; background: #282828; border-bottom: 1px solid #1b1b1b; }
.tab.img { width: 73px; }
.tab.active { width: 153px; gap: 2px; padding: 4px 4px 0 0; background: #2d2d2d; border-bottom: 4px solid #15539e; }
.tab .x { width: 10px; height: 10px; margin-left: 4px; }
.more { width: 30px; margin: 3px 1px 3px auto; border-radius: 5px; background: #2d2d2d; color: #919190; }
.frame { flex: 1; margin: 2px 1px 4px; border: 1px solid #1b1b1b; }
.subtabs { display: flex; height: 28px; border-bottom: 1px solid #1b1b1b; background: #2a2a2a; padding-left: 8px; }
.subtabs button { gap: 5px; padding: 3px 7px 0; height: 28px; border-bottom: 3px solid transparent; margin-right: 9px; }
.subtabs .sel { border-color: #15539e; }
.sq { width: 14px; height: 14px; border: 2px solid #eee; }
.full { background: #eee; }
.form { display: grid; grid-template-columns: 59px 1fr; row-gap: 4px; align-items: center; padding: 7px 0 0 12px; color: #919190; }
.row { display: flex; gap: 4px; align-items: stretch; }
.row > * { height: auto; }
.row .drop svg { top: 13px; }
.r34 { height: 34px; }
.r35 { height: 35px; }
.r36 { height: 36px; }
.r44 { height: 44px; }
.w102 { width: 102px; }
.w92 { width: 92px; }
.w75 { width: 75px; }
.w91 { width: 91px; }
.w73 { width: 73px; }
.w100 { width: 100px; }
.w108 { width: 108px; }
.line, .opt { border: 1px solid #1f1f1f; border-radius: 5px; background: #323232; }
.line { width: 69px; gap: 3px; padding-right: 2px; color: #858585; }
.line i { width: 40px; height: 1px; background: #5a5a5a; }
.line.solid { width: 136px; }
.solid i { width: 100px; height: 2px; background: #eee; }
.line svg { width: 12px; height: 8px; }
.opt { width: 36px; }
.opt svg { width: 24px; height: 24px; }
.opt.on { background: #232323; }
.blend { display: flex; align-items: center; justify-content: flex-end; margin-right: 3px; color: #919190; }
.blend .drop { width: 127px; }
.slide { height: 32px; margin: 4px 5px 0; }
.slide:last-child { margin-bottom: 4px; }
.slide label { flex: 1; padding: 5px 4px; border-right: 1px solid #1b1b1b; }
.slide input { flex: none; width: 42px; padding-left: 7px; }
.lit label { color: #fff; }

.commands { width: 49px; padding: 3px 4px 0 9px; }
.commands button { width: 36px; height: 35px; }
.commands hr { margin: 6px 0 7px; }

.palette { display: flex; align-items: center; height: 29px; padding: 0 2px 0 1px; }
.swatches { display: flex; align-self: flex-end; height: 17px; margin-right: 9px; padding-bottom: 1px; }
.swatches button { width: 16px; height: 16px; margin-right: 1px; }
.palette .plain { width: 14px; margin-right: 17px; }
.pmenu { width: 19px; height: 28px; margin-left: auto; }
.palette .plain + .plain { margin-right: 0; }

.status { display: flex; align-items: center; height: 43px; padding: 1px 16px 0 0; }
.status dl { display: grid; line-height: 21px; }
.style { grid-template-columns: 46px 110px; column-gap: 27px; width: 156px; }
.style dt { text-align: right; }
.status label { width: 16px; }
.status .spin { height: 41px; background: #2d2d2d; }
.layer { margin-left: 16px; padding-left: 6px; border-left: 3px solid #3f7ff0; line-height: 21px; width: 65px; justify-content: flex-start; }
.eye { width: 37px; }
.msg { flex: 1; height: 30px; padding: 5px 0 0 6px; border-left: 1px solid #2e2e2e; font-family: "Noto Sans", "Open Sans", sans-serif; white-space: nowrap; }
.pos { grid-template-columns: 20px 49px; margin-right: 10px; }
.pos dd { text-align: right; }
.status .pos + label { width: 12px; }
.status .lr { width: 12px; margin-left: 10px; }
.w100 button, .w108 button { width: 22px; }
.w100 input, .w108 input { padding-left: 11px; }
.w108 input { padding-left: 15px; }

.taskbar { display: grid; grid-template-columns: 1fr auto 1fr; align-items: center; height: 60px; background: #f0f0f0; color: #111; }
.widget { width: 30px; height: 28px; margin-left: 22px; }
.widget svg { width: 30px; height: 28px; }
.apps { display: flex; align-items: center; gap: 7px; }
.apps button { position: relative; width: 48px; height: 48px; border-radius: 5px; }
.apps svg { width: 30px; height: 30px; }
.apps .search { width: 123px; height: 38px; margin: 0 2px; gap: 7px; border-radius: 20px; background: #fff; }
.apps .search svg { width: 18px; height: 18px; }
.apps .active { background: #fff; }
.run::after, .active::after { content: ""; position: absolute; left: 20px; bottom: 1px; width: 8px; height: 3px; border-radius: 2px; background: #858585; }
.apps .active::after { left: 14px; width: 20px; background: #0078d7; }
.badge { position: absolute; left: 24px; top: 3px; min-width: 20px; height: 20px; padding: 0 5px; border-radius: 10px; background: #0078d7; color: #fff; font-size: 13px; line-height: 20px; text-align: center; }
.tab.active::after { content: none; }
.tray { display: flex; align-items: center; justify-content: flex-end; padding-right: 23px; }
.tray button { width: 30px; }
.tray .wide { width: 38px; }
.tray svg { width: 20px; height: 20px; }
.clock { display: flex; flex-direction: column; align-items: flex-end; width: 85px; line-height: 20px; padding-bottom: 1px; margin-right: 4px; }
.tray button:last-child { width: 20px; margin-left: 5px; }
```
FILE: script.js
```js
// Rulers: 1.71 px per millimetre, a tick each 5 mm and a label each 50 mm.
const SCALE = 1.71;
const NS = 'http://www.w3.org/2000/svg';
function add(parent, tag, attrs, text) {
  const el = document.createElementNS(NS, tag);
  for (const k in attrs) el.setAttribute(k, attrs[k]);
  if (text !== undefined) el.textContent = text;
  parent.appendChild(el);
}
const h = document.getElementById('ruler-h');
const v = document.getElementById('ruler-v');
// Labels stop where they would run over the end of the ruler.
const hEnd = h.clientWidth - 30, vEnd = v.clientHeight - 54;
let hd = 'M0 25.5H4000', vd = 'M17.5 0V3000';
for (let mm = -375; mm <= 1500; mm += 5) {
  const x = Math.round(642 + mm * SCALE) + 0.5;
  const major = mm % 50 === 0;
  const len = major ? 25 : mm % 25 === 0 ? 13 : 7;
  if (x > 0) {
    hd += `M${x} ${25 - len}V25`;
    if (major && x < hEnd) add(h, 'text', { x: x + 4, y: 14 }, mm);
  }
  const y = Math.round(226 + mm * SCALE) + 0.5;
  if (y > 0) {
    vd += `M${major ? 0 : mm % 25 === 0 ? 8 : 12} ${y}H18`;
    if (major && y < vEnd) [...String(mm)].forEach((c, i) => add(v, 'text', { x: c === '-' ? 5 : 4, y: y + 15 + i * 14 }, c));
  }
}
add(h, 'path', { d: hd, stroke: '#a2a2a2', fill: 'none' });
add(h, 'path', { d: 'M1174 20h10l-5 6z' });
add(v, 'path', { d: vd, stroke: '#a2a2a2', fill: 'none' });
add(v, 'path', { d: 'M13 167v10l5-5z' });

// Inkscape default palette, as far as the strip reaches.
const colors = ('000000 1a1a1a 333333 4d4d4d 666666 808080 999999 b3b3b3 cccccc e6e6e6 ececec f2f2f2 f9f9f9 ffffff ' +
  '800000 ff0000 808000 ffff00 008000 00ff00 008080 00ffff 000080 0000ff 800080 ff00ff ' +
  '2b0000 550000 800000 aa0000 d40000 ff0000 ff2a2a ff5555 ff8080 ffaaaa ffd5d5 ' +
  '280b0b 501616 782121 a02c2c c83737 d35f5f de8787 e9afaf f4d7d7 ' +
  '241c1c 483737 6c5353 916f6f ac9393 c8b7b7 e3dbdb ' +
  '2b1100 552200 803300 aa4400 d45500 ff6600 ff7f2a ff9955 ffb380 ffccaa ffe6d5 ' +
  '28170b 502d16 784421 a05a2c c87137 d38d5f deaa87 e9c6af f4e3d7 ' +
  '241f1c 483e37 6c5d53 917c6f ac9d93 c8beb7 e3dedb ' +
  '2b2200 554400 806600 aa8800 d4aa00 ffcc00 ffd42a ffdd55 ffe680 ffeeaa fff6d5 ' +
  '28220b 504416 786721 a0892c c8ab37 d3bc5f decd87 e9ddaf f4eed7 ' +
  '24221c 484537 6c6753 918a6f aca793 c8c4b7 e3e2db').split(' ');
const strip = document.getElementById('swatches');
strip.innerHTML = '<button aria-label="None"><svg viewBox="0 0 16 16"><path d="M0 0h16v16H0z" fill="#fff"/><path d="m0 0 16 16M16 0 0 16" stroke="#7a1015" stroke-width="1.5"/></svg></button>' +
  colors.map(c => `<button aria-label="#${c}" style="background:#${c}"></button>`).join('');
```
